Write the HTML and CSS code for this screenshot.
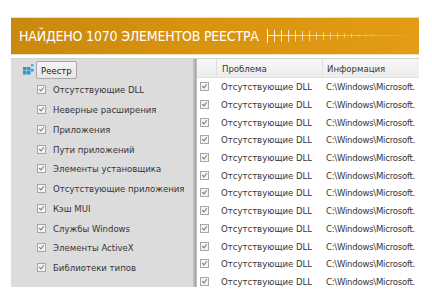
FILE: index.html
```html
<!DOCTYPE html>
<html>
<head>
<meta charset="utf-8">
<link rel="stylesheet" href="styles.css">
</head>
<body>
<div class="page">
  <div class="banner">
    <span class="banner-title">НАЙДЕНО 1070 ЭЛЕМЕНТОВ РЕЕСТРА</span>
    <svg class="ruler" width="152" height="16" viewBox="0 0 152 16">
      <defs>
        <linearGradient id="fade" x1="0" x2="1" y1="0" y2="0">
          <stop offset="0" stop-color="#fff" stop-opacity="0.85"/>
          <stop offset="1" stop-color="#fff" stop-opacity="0"/>
        </linearGradient>
      </defs>
      <rect x="0" y="6" width="152" height="1" fill="url(#fade)"/>
      <g stroke="#fff" stroke-width="1">
        <line x1="0.5" y1="0" x2="0.5" y2="14" stroke-opacity="0.9"/>
        <line x1="7.5" y1="1" x2="7.5" y2="13" stroke-opacity="0.85"/>
        <line x1="14.5" y1="1" x2="14.5" y2="13" stroke-opacity="0.8"/>
        <line x1="21.5" y1="1" x2="21.5" y2="13" stroke-opacity="0.75"/>
        <line x1="28.5" y1="1.5" x2="28.5" y2="12.5" stroke-opacity="0.7"/>
        <line x1="35.5" y1="2" x2="35.5" y2="12" stroke-opacity="0.65"/>
        <line x1="42.5" y1="2" x2="42.5" y2="12" stroke-opacity="0.6"/>
        <line x1="49.5" y1="2.5" x2="49.5" y2="11.5" stroke-opacity="0.55"/>
        <line x1="56.5" y1="3" x2="56.5" y2="11" stroke-opacity="0.5"/>
        <line x1="63.5" y1="3" x2="63.5" y2="10.5" stroke-opacity="0.45"/>
        <line x1="70.5" y1="3.5" x2="70.5" y2="10" stroke-opacity="0.4"/>
        <line x1="77.5" y1="4" x2="77.5" y2="9.5" stroke-opacity="0.35"/>
        <line x1="84.5" y1="4" x2="84.5" y2="9" stroke-opacity="0.3"/>
        <line x1="91.5" y1="4.5" x2="91.5" y2="9" stroke-opacity="0.25"/>
        <line x1="98.5" y1="5" x2="98.5" y2="8.5" stroke-opacity="0.2"/>
        <line x1="105.5" y1="5" x2="105.5" y2="8" stroke-opacity="0.15"/>
      </g>
    </svg>
  </div>
  <div class="content">
    <div class="left">
      <div class="root">
        <svg class="reg-icon" width="11" height="11" viewBox="0 0 11 11">
          <rect x="0" y="3" width="3.5" height="3.5" fill="#1f9ad6"/>
          <rect x="4" y="3" width="3.5" height="3.5" fill="#1f9ad6"/>
          <rect x="0" y="7" width="3.5" height="3.5" fill="#1f9ad6"/>
          <rect x="4" y="7" width="3.5" height="3.5" fill="#1f9ad6"/>
          <rect x="8" y="5" width="2.5" height="2.5" fill="#1f9ad6"/>
          <rect x="8" y="0" width="2.5" height="2.5" fill="#4cb3e4"/>
        </svg>
        <span class="root-btn">Реестр</span>
      </div>
      <div class="item"><span class="cb"></span>Отсутствующие DLL</div>
      <div class="item"><span class="cb"></span>Неверные расширения</div>
      <div class="item"><span class="cb"></span>Приложения</div>
      <div class="item"><span class="cb"></span>Пути приложений</div>
      <div class="item"><span class="cb"></span>Элементы установщика</div>
      <div class="item"><span class="cb"></span>Отсутствующие приложения</div>
      <div class="item"><span class="cb"></span>Кэш MUI</div>
      <div class="item"><span class="cb"></span>Службы Windows</div>
      <div class="item"><span class="cb"></span>Элементы ActiveX</div>
      <div class="item"><span class="cb"></span>Библиотеки типов</div>
    </div>
    <div class="splitter"></div>
    <div class="right">
      <div class="hrow">
        <div class="c0"></div>
        <div class="c1">Проблема</div>
        <div class="c2">Информация</div>
      </div>
      <div class="row"><div class="c0"><span class="cb"></span></div><div class="c1">Отсутствующие DLL</div><div class="c2">C:\Windows\Microsoft.</div></div>
      <div class="row"><div class="c0"><span class="cb"></span></div><div class="c1">Отсутствующие DLL</div><div class="c2">C:\Windows\Microsoft.</div></div>
      <div class="row"><div class="c0"><span class="cb"></span></div><div class="c1">Отсутствующие DLL</div><div class="c2">C:\Windows\Microsoft.</div></div>
      <div class="row"><div class="c0"><span class="cb"></span></div><div class="c1">Отсутствующие DLL</div><div class="c2">C:\Windows\Microsoft.</div></div>
      <div class="row"><div class="c0"><span class="cb"></span></div><div class="c1">Отсутствующие DLL</div><div class="c2">C:\Windows\Microsoft.</div></div>
      <div class="row"><div class="c0"><span class="cb"></span></div><div class="c1">Отсутствующие DLL</div><div class="c2">C:\Windows\Microsoft.</div></div>
      <div class="row"><div class="c0"><span class="cb"></span></div><div class="c1">Отсутствующие DLL</div><div class="c2">C:\Windows\Microsoft.</div></div>
      <div class="row"><div class="c0"><span class="cb"></span></div><div class="c1">Отсутствующие DLL</div><div class="c2">C:\Windows\Microsoft.</div></div>
      <div class="row"><div class="c0"><span class="cb"></span></div><div class="c1">Отсутствующие DLL</div><div class="c2">C:\Windows\Microsoft.</div></div>
      <div class="row"><div class="c0"><span class="cb"></span></div><div class="c1">Отсутствующие DLL</div><div class="c2">C:\Windows\Microsoft.</div></div>
      <div class="row"><div class="c0"><span class="cb"></span></div><div class="c1">Отсутствующие DLL</div><div class="c2">C:\Windows\Microsoft.</div></div>
      <div class="row"><div class="c0"><span class="cb"></span></div><div class="c1">Отсутствующие DLL</div><div class="c2">C:\Windows\Microsoft.</div></div>
    </div>
  </div>
</div>
</body>
</html>
```

FILE: styles.css
```css
html, body {
  margin: 0;
  padding: 0;
  background: #ffffff;
}
body {
  width: 432px;
  height: 303px;
  overflow: hidden;
  font-family: "DejaVu Sans Condensed", "DejaVu Sans", sans-serif;
  font-stretch: condensed;
}
.page {
  padding: 18px 13px 0 11px;
}
.banner {
  height: 36px;
  background: linear-gradient(90deg, #c9890e 0%, #d8930f 45%, #e29c15 100%);
  display: flex;
  align-items: center;
  padding-left: 8px;
  box-shadow: 0 1px 0 #f4e2c0, 0 -1px 0 #f1dcb5;
}
.banner-title {
  font-size: 14px;
  color: #ffffff;
  letter-spacing: -0.2px;
  white-space: nowrap;
}
.ruler {
  margin-left: 8px;
  margin-top: 1px;
  display: block;
}
.content {
  margin-top: 4px;
  height: 228px;
  display: flex;
  border-top: 1px solid #d0d0d0;
  overflow: hidden;
}
.left {
  width: 182px;
  background: #dcdcdc;
  padding-top: 1px;
  font-size: 9.5px;
  color: #363636;
}
.splitter {
  width: 4px;
  background: linear-gradient(90deg, #c8c8c8, #a9a9a9 60%, #c2c2c2);
}
.right {
  flex: 1;
  background: #ffffff;
  font-size: 9.5px;
  color: #363636;
  overflow: hidden;
}
.root {
  height: 20px;
  display: flex;
  align-items: center;
  padding-left: 12px;
}
.reg-icon {
  display: block;
  margin-top: -1px;
}
.root-btn {
  margin-left: 2px;
  height: 18px;
  box-sizing: border-box;
  padding: 0 4px;
  border: 1px solid #a8a8a8;
  border-radius: 2px;
  background: linear-gradient(#f4f4f4, #e6e6e6);
  display: flex;
  align-items: center;
  color: #222;
}
.item {
  height: 19.75px;
  display: flex;
  align-items: center;
  padding-left: 26px;
  white-space: nowrap;
}
.cb {
  width: 9px;
  height: 9px;
  box-sizing: border-box;
  border: 1px solid #a6a6a6;
  background: #f4f4f4;
  margin-right: 7px;
  position: relative;
  flex: none;
}
.cb::after {
  content: "";
  position: absolute;
  left: 2px;
  top: 0px;
  width: 2px;
  height: 4px;
  border-right: 1px solid #7a7a7a;
  border-bottom: 1px solid #7a7a7a;
  transform: rotate(40deg);
}
.hrow {
  height: 18px;
  display: flex;
  align-items: center;
  background: linear-gradient(#f7f7f7, #ececec);
  border-bottom: 1px solid #e2e2e2;
}
.hrow .c1, .hrow .c2 {
  border-left: 1px solid #e0e0e0;
  height: 100%;
  display: flex;
  align-items: center;
  box-sizing: border-box;
}
.row {
  height: 17.7px;
  display: flex;
  align-items: center;
  white-space: nowrap;
}
.c0 {
  width: 19px;
  padding-left: 3px;
  box-sizing: border-box;
  flex: none;
  display: flex;
  align-items: center;
}
.c0 .cb {
  margin-right: 0;
}
.c1 {
  width: 106px;
  padding-left: 5px;
  box-sizing: border-box;
  flex: none;
}
.c2 {
  flex: 1;
  padding-left: 4px;
  box-sizing: border-box;
  overflow: hidden;
}
.row .c2 {
  letter-spacing: -0.25px;
}
```
